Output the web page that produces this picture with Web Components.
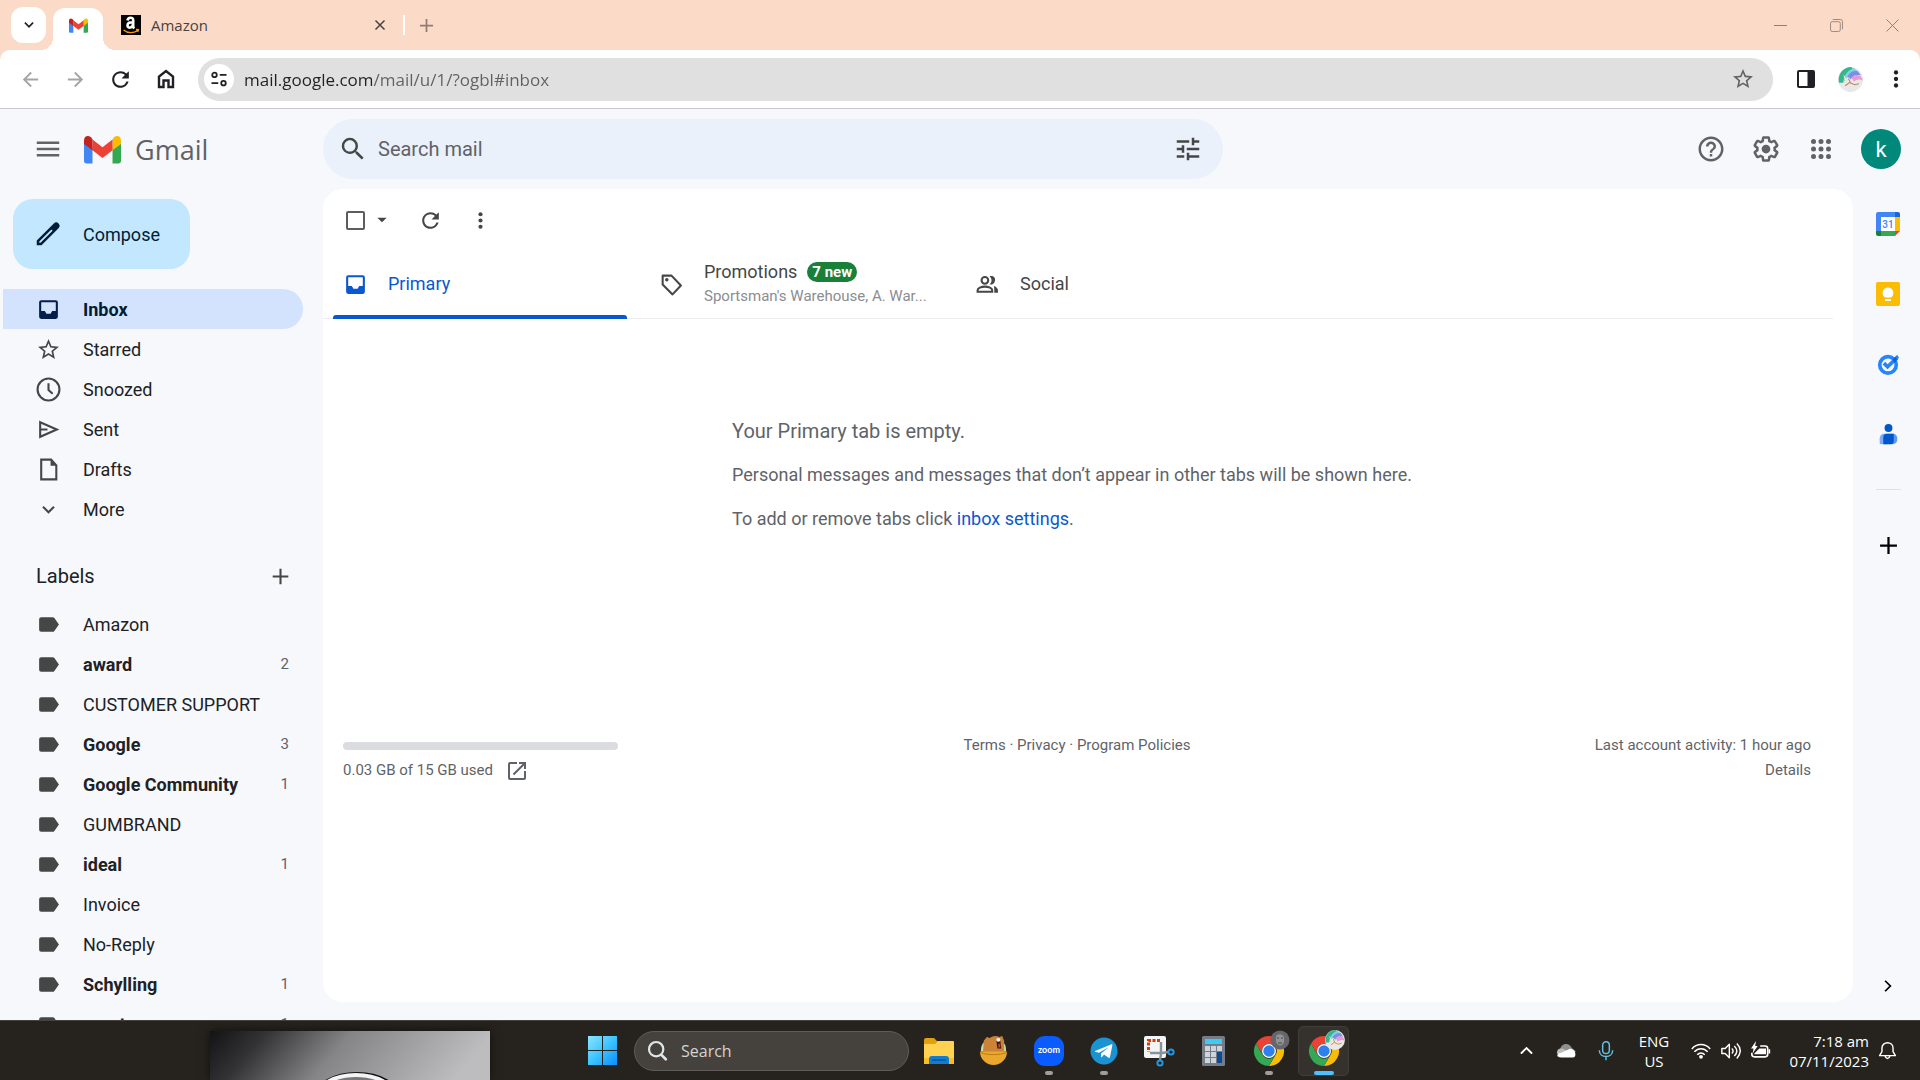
<!DOCTYPE html>
<html lang="en">
<head>
<meta charset="utf-8">
<title>Gmail</title>
<style>
body {
    margin: 0;
    height: 100vh;
    display: flex;
    flex-direction: column;
    overflow: hidden;
    font-family: Roboto, "Liberation Sans", sans-serif;
    font-size: 18px;
    color: #202124;
    background: #f6f8fc;
}
</style>
</head>
<body>
<tab-strip></tab-strip>
<address-bar></address-bar>
<gmail-app></gmail-app>
<task-bar></task-bar>

<script>

const GMAIL = `
    <path fill="#4285f4" d="M0 6v27a3 3 0 0 0 3 3h8V15z"/>
    <path fill="#34a853" d="M37 15v21h8a3 3 0 0 0 3-3V6z"/>
    <path fill="#fbbc04" d="M37 5v14l11-8V6c0-5-5-7-9-4z"/>
    <path fill="#ea4335" d="M11 19V5l13 10L37 5v14L24 29z"/>
    <path fill="#c5221f" d="M0 6v5l11 8V5L9 2C5-1 0 1 0 6z"/>`

const CHROME = `
    <path fill="#ea4335" d="M2 9.500A15 15 0 0 1 28 9.500L15 10a7 7 0 0 0-6.500 10z"/>
    <path fill="#fbbc04" d="M28 9.500A15 15 0 0 1 15 32l6.500-11a7 7 0 0 0-6-11z"/>
    <path fill="#34a853" d="M2 9.500A15 15 0 0 0 15 32l6.300-11.500A7 7 0 0 1 8.500 20.500z"/>
    <circle cx="15" cy="17" r="7" fill="#fff"/>
    <circle cx="15" cy="17" r="5.700" fill="#2f80ed"/>`

const RAINBOW = `
    <circle cx="12" cy="12" r="12" fill="#e8e8ea"/>
    <path fill="#35b58d" d="M1 15A12 12 0 0 1 13 0l2 3C9 4 6 9 5 15z"/>
    <path fill="#7fd3e0" d="M5 14C6 7 10 3 15 1l4 3c-7 1-10 5-11 9z"/>
    <path fill="#7d8ee8" d="M9 9c2-4 6-6 10-5l3 4c-5-1-8 1-10 4z"/>
    <path fill="#e79ad5" d="M13 10c2-3 6-3 9-1l2 4c-4-2-6-1-9 1z"/>
    <path fill="#f4e6d2" d="M5 7l3 4 3-1 2 5 7-1 1 4-6 1-7-1-3 1 2-5z"/>
    <path fill="none" stroke="#a08c7a" d="M7 18l4-3 5 2 4-1M10 11l2 4"/>`

// name: [viewBox, content]. Single-colour icons use currentcolor.
const ICONS = {
    gmail: ['0 0 48 36', GMAIL],
    chevron: ['0 0 24 24', '<path fill="none" stroke="currentcolor" stroke-width="3" d="M5 8l7 7 7-7"/>'],
    chevronThin: ['0 0 24 24', '<path d="M7.410 8.590L12 13.170l4.590-4.580L18 10l-6 6-6-6z"/>'],
    chevronUp: ['0 0 24 24', '<path fill="none" stroke="currentcolor" stroke-width="3" stroke-linecap="round" d="M4 16l8-8 8 8"/>'],
    chevronRight: ['0 0 24 24', '<path fill="none" stroke="currentcolor" stroke-width="3" d="M7 3l9 9-9 9"/>'],
    amazon: ['0 0 20 20', `<rect width="20" height="20" fill="#000"/>
        <path fill="none" stroke="#fff" stroke-width="2.600" d="M6.500 5.500C7 2 12.200 2 12.200 5v6.500c0 1 .6 1.500 1 2M12 7.200c-3 0-5.500.5-5.500 3.200 0 3.600 5.500 2.600 5.500-1.400"/>
        <path fill="none" stroke="#f90" stroke-width="1.300" d="M2.500 15c4 3.400 10 3.400 14 .6M15 14.500l2.500.2-.8 2.300"/>`],
    close: ['0 0 24 24', '<path fill="none" stroke="currentcolor" stroke-width="3" d="M3 3l18 18M21 3L3 21"/>'],
    closeThin: ['0 0 24 24', '<path fill="none" stroke="currentcolor" stroke-width="1.800" d="M1 1l22 22M23 1L1 23"/>'],
    minimize: ['0 0 24 24', '<path fill="none" stroke="currentcolor" stroke-width="1.800" d="M0 12h24"/>'],
    restore: ['0 0 24 24', '<g fill="none" stroke="currentcolor" stroke-width="1.600"><rect x="1" y="5" width="18" height="18" rx="3"/><path d="M5 1h14a4 4 0 0 1 4 4v14"/></g>'],
    plus: ['0 0 24 24', '<path fill="none" stroke="currentcolor" stroke-width="2" d="M12 4.500v15M4.500 12h15"/>'],
    back: ['0 0 24 24', '<path d="M20 11H7.830l5.590-5.590L12 4l-8 8 8 8 1.410-1.410L7.830 13H20z"/>'],
    forward: ['0 0 24 24', '<path d="M12 4l-1.410 1.410L16.170 11H4v2h12.170l-5.580 5.590L12 20l8-8z"/>'],
    refresh: ['0 0 24 24', '<path d="M17.650 6.350A7.958 7.958 0 0 0 12 4c-4.420 0-7.990 3.580-7.990 8s3.570 8 7.990 8c3.730 0 6.840-2.550 7.730-6h-2.080A5.990 5.990 0 0 1 12 18c-3.310 0-6-2.690-6-6s2.690-6 6-6c1.660 0 3.140.69 4.220 1.780L13 11h7V4z"/>'],
    home: ['0 0 24 24', '<path fill="none" stroke="currentcolor" stroke-width="2.400" d="M5 20V9.500L12 4l7 5.500V20h-4.500v-6.500h-5V20z"/>'],
    site: ['0 0 24 24', '<g fill="none" stroke="currentcolor" stroke-width="2.400"><circle cx="6" cy="6.500" r="3"/><path d="M13 6.500h9M2 17.500h9"/><circle cx="18" cy="17.500" r="3"/></g>'],
    star: ['0 0 24 24', '<path d="M22 9.240l-7.190-.62L12 2 9.190 8.630 2 9.240l5.460 4.730L5.820 21 12 17.270 18.180 21l-1.630-7.030zM12 15.400l-3.760 2.270 1-4.280-3.320-2.880 4.380-.38L12 6.100l1.710 4.040 4.380.38-3.320 2.880 1 4.280z"/>'],
    panel: ['0 0 24 24', '<path d="M5 3h14a2 2 0 0 1 2 2v14a2 2 0 0 1-2 2H5a2 2 0 0 1-2-2V5a2 2 0 0 1 2-2zm0 2v14h8.500V5z"/>'],
    rainbow: ['0 0 24 24', RAINBOW],
    more: ['0 0 24 24', '<circle cx="12" cy="6" r="2"/><circle cx="12" cy="12" r="2"/><circle cx="12" cy="18" r="2"/>'],
    menu: ['0 0 24 24', '<path d="M3 18h18v-2H3zm0-5h18v-2H3zm0-7v2h18V6z"/>'],
    search: ['0 0 24 24', '<path d="M15.500 14h-.79l-.28-.27A6.471 6.471 0 0 0 16 9.500 6.500 6.500 0 1 0 9.500 16c1.610 0 3.090-.59 4.230-1.570l.27.28v.79l5 4.990L20.490 19zm-6 0C7.010 14 5 11.990 5 9.500S7.010 5 9.500 5 14 7.010 14 9.500 11.990 14 9.500 14z"/>'],
    tune: ['0 0 24 24', '<path d="M3 17v2h6v-2H3zM3 5v2h10V5H3zm10 16v-2h8v-2h-8v-2h-2v6h2zM7 9v2H3v2h4v2h2V9H7zm14 4v-2H11v2h10zm-6-4h2V7h4V5h-4V3h-2v6z"/>'],
    help: ['0 0 24 24', '<path d="M11 18h2v-2h-2v2zm1-16C6.480 2 2 6.480 2 12s4.480 10 10 10 10-4.480 10-10S17.520 2 12 2zm0 18c-4.410 0-8-3.590-8-8s3.590-8 8-8 8 3.590 8 8-3.590 8-8 8zm0-14c-2.210 0-4 1.790-4 4h2c0-1.100.9-2 2-2s2 .9 2 2c0 2-3 1.750-3 5h2c0-2.250 3-2.500 3-5 0-2.210-1.790-4-4-4z"/>'],
    gear: ['0 0 24 24', '<path d="M13.850 22.250h-3.700c-.74 0-1.360-.54-1.450-1.270l-.27-1.890c-.27-.14-.53-.29-.79-.46l-1.800.72c-.7.26-1.470-.03-1.810-.65L2.200 15.530c-.35-.66-.2-1.440.36-1.880l1.530-1.190c-.01-.15-.02-.3-.02-.46 0-.15.01-.31.02-.46l-1.520-1.190c-.59-.45-.74-1.260-.37-1.880l1.850-3.190c.34-.62 1.110-.9 1.790-.63l1.810.73c.26-.17.52-.32.78-.46l.27-1.910c.09-.7.71-1.250 1.440-1.250h3.700c.74 0 1.360.54 1.450 1.270l.27 1.890c.27.14.53.29.79.46l1.800-.72c.71-.26 1.480.03 1.820.65l1.840 3.180c.36.66.2 1.440-.36 1.880l-1.520 1.190c.01.15.02.3.02.46s-.01.31-.02.46l1.520 1.190c.56.45.72 1.230.37 1.860l-1.860 3.220c-.34.62-1.110.9-1.800.63l-1.800-.72c-.26.17-.52.32-.78.46l-.27 1.910c-.1.68-.72 1.220-1.460 1.220zm-3.230-2h2.760l.37-2.550.53-.22c.44-.18.88-.44 1.340-.78l.45-.34 2.380.96 1.380-2.400-2.030-1.580.07-.56c.03-.26.06-.51.06-.78s-.03-.53-.06-.78l-.07-.56 2.030-1.580-1.390-2.400-2.390.96-.45-.35c-.42-.32-.87-.58-1.330-.77l-.52-.22-.37-2.550h-2.760l-.37 2.550-.53.21c-.44.19-.88.44-1.340.79l-.45.33-2.380-.95-1.390 2.390 2.030 1.580-.07.56a7 7 0 0 0-.06.79c0 .26.02.53.06.78l.07.56-2.030 1.580 1.380 2.400 2.390-.96.45.35c.43.33.86.58 1.330.77l.53.22z"/><circle cx="12" cy="12" r="3.500"/>'],
    apps: ['0 0 24 24', [6, 12, 18].map(y => [6, 12, 18].map(x => `<circle cx="${x}" cy="${y}" r="2"/>`).join('')).join('')],
    pencil: ['0 0 24 24', '<path fill-rule="evenodd" d="M20.400 3.600a2.600 2.600 0 0 0-3.700 0L3 17.200V21h3.800L20.400 7.300a2.600 2.600 0 0 0 0-3.700zM6 19H5v-1l9.700-9.700 1 1z"/>'],
    inbox: ['0 0 24 24', '<path fill-rule="evenodd" d="M5 3h14a2 2 0 0 1 2 2v14a2 2 0 0 1-2 2H5a2 2 0 0 1-2-2V5a2 2 0 0 1 2-2zm0 2v8.500h3.500l1.500 2.500h4l1.500-2.500H19V5z"/>'],
    clock: ['0 0 24 24', '<g fill="none" stroke="currentcolor" stroke-width="2"><circle cx="12" cy="12" r="10.500"/><path d="M12 6v6.500l4 3.500"/></g>'],
    send: ['0 0 24 24', '<path fill="none" stroke="currentcolor" stroke-width="2" d="M4 5l16 7-16 7zM4 12h7"/>'],
    draft: ['0 0 24 24', '<path fill="none" stroke="currentcolor" stroke-width="2" d="M5 2.500h9.500L19.500 8v13.500H5z"/><path d="M14 2v6.500h6z"/>'],
    label: ['0 0 24 24', '<path d="M17.630 5.840C17.270 5.330 16.670 5 16 5H5a2 2 0 0 0-2 2v10a2 2 0 0 0 2 2h11c.67 0 1.270-.33 1.630-.84L22 12z"/>'],
    tag: ['0 0 24 24', '<path fill="none" stroke="currentcolor" stroke-width="2" stroke-linejoin="round" d="M3.500 3.500h8.500l9 9.500-8 8.500-9.500-9.500z"/><circle cx="7.500" cy="7.500" r="1.700"/>'],
    people: ['0 0 24 24', '<g fill="none" stroke="currentcolor" stroke-width="2"><circle cx="9.500" cy="8" r="3.200"/><path d="M2.500 19v-1.500c0-2 3.500-3.500 7-3.500s7 1.500 7 3.500V19z"/></g><path d="M14 4c4.500-.8 6 2 5 5s-3 3-5 3c2.500-2.500 2.500-5.500 0-8zM18 13.500c3 1 4 2.500 4 4V20h-3.500v-2.500c0-1.500 0-2.500-.5-4z"/>'],
    caret: ['0 0 24 24', '<path d="M4 8h16l-8 8z"/>'],
    open: ['0 0 24 24', '<path d="M19 19H5V5h7V3H5a2 2 0 0 0-2 2v14a2 2 0 0 0 2 2h14a2 2 0 0 0 2-2v-7h-2zM14 3v2h3.590l-9.830 9.830 1.410 1.410L19 6.410V10h2V3z"/>'],
    calendar: ['0 0 24 24', `<rect width="24" height="24" rx="2" fill="#fff"/>
        <path fill="#4285f4" d="M2 0h17v5H5v14H0V2a2 2 0 0 1 2-2z"/>
        <path fill="#1967d2" d="M19 0h3a2 2 0 0 1 2 2v3h-5z"/>
        <path fill="#fbbc04" d="M19 5h5v14h-5z"/>
        <path fill="#34a853" d="M5 19h14v5H5z"/>
        <path fill="#188038" d="M0 19h5v5H2a2 2 0 0 1-2-2z"/>
        <path fill="#ea4335" d="M19 19h5l-5 5z"/>
        <text x="12" y="16" text-anchor="middle" font-size="10" font-weight="500" font-family="Roboto, sans-serif" fill="#4285f4">31</text>`],
    keep: ['0 0 24 24', `<rect width="24" height="24" rx="2" fill="#fbbc04"/>
        <path fill="#fff" d="M12 5.500a5.500 5.500 0 0 1 3 10H9a5.500 5.500 0 0 1 3-10zM9 17h6v2H9z"/>`],
    tasks: ['0 0 24 24', `<circle cx="12" cy="13" r="9" fill="none" stroke="#2684fc" stroke-width="4"/>
        <path fill="none" stroke="#2684fc" stroke-width="4" d="M7.500 11l4 4L22 5"/>
        <path fill="#0066da" d="M17 7l3-3 3 2-4 5z"/><path fill="#2684fc" d="M20 4l2-2 2 3-2 2z"/>`],
    contacts: ['0 0 24 24', `<rect x="2" y="11" width="14" height="12" rx="5" fill="#7baaf7"/><path fill="#7baaf7" d="M2 17h6v6H2z"/>
        <rect x="8" y="11" width="14" height="12" rx="5" fill="#5e97f6"/><path fill="#0057cc" d="M6 23v-8a4 4 0 0 1 4-4h8v8a4 4 0 0 1-4 4z"/>
        <circle cx="12" cy="4.500" r="4.500" fill="#0057cc"/>`],
    windows: ['0 0 29 29', `<defs><linearGradient id="w" x2="1" y2="1"><stop stop-color="#8be6ff"/><stop offset=".5" stop-color="#3cc4ff"/><stop offset="1" stop-color="#0a8cff"/></linearGradient></defs>
        <path fill="url(#w)" d="M0 0h14v14H0zM15 0h14v14H15zM0 15h14v14H0zM15 15h14v14H15z"/>`],
    winSearch: ['0 0 24 24', '<g fill="none" stroke="#dfe6ea" stroke-width="2.400"><circle cx="10" cy="10" r="7.800"/><path stroke-linecap="round" stroke-width="3" d="M16 16.500l4.500 4.500"/></g>'],
    folder: ['0 0 30 30', `<path fill="#e0a010" d="M0 4a2 2 0 0 1 2-2h8l3 3h15v9H0z"/>
        <path fill="#ffd34f" d="M0 8h11l3-3h15a1 1 0 0 1 1 1v22H0z"/><path fill="#f9bd2b" d="M0 22h30v6H0z"/>
        <path fill="#0f7dd1" d="M5 28v-5a3 3 0 0 1 3-3h14a3 3 0 0 1 3 3v5z"/><path stroke="#074f91" stroke-width="1.400" d="M8 24h14"/>`],
    bear: ['0 0 30 30', `<path fill="#cfe0a5" d="M2 16c0-6 2-9 4-10v10zM28 16c0-6-1-8-3-9v9z"/>
        <path fill="#cc8338" d="M4 17l1-12 3-4 3 1c3-2 7-3 10-1l3-1 2 5v12z"/>
        <path fill="#2b1b1b" d="M18 5h4l1 8h-4z"/><path fill="#d33c3c" d="M20 8h2v4h-2z"/><circle cx="20" cy="4" r="2" fill="#fff"/>
        <path fill="#e9a72b" d="M1 16h28a14 14 0 0 1-28 0z"/><path fill="none" stroke="#b97b16" d="M1 17c8 3 20 3 28 0"/>`],
    zoom: ['0 0 30 30', `<rect width="30" height="30" rx="11" fill="#0b5cff"/>
        <text x="15" y="17" text-anchor="middle" font-family="Lato, sans-serif" font-weight="700" font-size="9" fill="#fff">zoom</text>`],
    telegram: ['0 0 30 30', `<circle cx="15" cy="15" r="13.500" fill="#1b92d1"/>
        <path fill="#fff" d="M6 15l16-6.500c1-.4 1.500 0 1.300 1L21 21c-.3 1-1 1.200-1.800.6L15 18.500 13 21c-.6.600-1 .4-1-.3v-3.200L20 11l-10 5.700-4-1z"/>`],
    snip: ['0 0 30 30', `<rect width="22" height="22" rx="2" fill="#f3f4f6"/>
        <path fill="none" stroke="#d83b01" stroke-width="3" stroke-dasharray="3 1.500" d="M16 4.500H4.500V16"/>
        <path fill="none" stroke="#8a9299" stroke-width="2.400" d="M17 6v12l-1 6M6 17h12l6-1"/>
        <g fill="none" stroke="#2196e3" stroke-width="2"><circle cx="27" cy="16" r="2.600"/><circle cx="16" cy="27" r="2.600"/></g>`],
    calculator: ['0 0 30 30', `<rect x="3" width="23" height="30" rx="1.500" fill="#747d87"/><path fill="#3ccbf4" d="M6 3h17v5H6z"/>
        <path fill="#ced4da" d="M6 10h5v5H6zM12 10h5v5h-5zM18 10h5v5h-5zM6 16h5v5H6zM12 16h5v5h-5zM6 22h5v5H6zM12 22h5v5h-5z"/>
        <path fill="#0d4a94" d="M18 16h5v11h-5z"/>`],
    chromePhoto: ['0 2 30 30', `${CHROME}<circle cx="26" cy="6" r="9.500" fill="#66676a"/><path fill="#929396" d="M22 2c3-3 7-2 8 1v5c-1 4-6 5-8 0z"/><path fill="none" stroke="#48494b" d="M23 4h2M27 4h2M24 9h4"/>`],
    chromeRainbow: ['0 2 30 30', `${CHROME}<g transform="translate(16 -4) scale(.83)">${RAINBOW}</g>`],
    cloud: ['0 0 24 24', '<path fill="#8f8f8f" d="M5 10c1-6 10-8 13-1l5 4-16 4z"/><path fill="#bdbdbd" d="M1 15c0-5 4-6 7-5l8 4-10 5z"/><path fill="#fff" d="M6 20c-6 0-6-5 0-5.500L16 10c6-1 9 10 3 10z"/>'],
    mic: ['0 0 24 24', '<g fill="none" stroke="#63bfe0" stroke-width="1.800"><rect x="8" y="1" width="8" height="14" rx="4"/><path d="M4 11c0 10 16 10 16 0M12 19v4"/></g>'],
    wifi: ['0 0 24 24', '<g fill="none" stroke="currentcolor" stroke-width="1.800"><path d="M1 9.500c6-7 16-7 22 0M4 13c4.500-5 11.500-5 16 0M7.500 16.500c2.500-3 6.500-3 9 0"/></g><circle cx="12" cy="19" r="2.300"/>'],
    sound: ['0 0 24 24', '<path fill="none" stroke="currentcolor" stroke-width="1.700" stroke-linejoin="round" d="M1 9h4l5-5v16l-5-5H1zM13 9c2 2 2 4 0 6M16 6c4 4 4 8 0 12M19 3c6 6 5 12 0 18"/>'],
    battery: ['0 0 24 24', '<path fill="none" stroke="currentcolor" stroke-width="2" d="M11 6h6a3 3 0 0 1 3 3v7a3 3 0 0 1-3 3H4a3 3 0 0 1-3-3v-2"/><path d="M10 9h8v7H4v-1zM21 10h2v5h-2zM6 0L0 9h3l-1 6 6-9H5z"/>'],
    bell: ['0 0 24 24', '<path fill="none" stroke="currentcolor" stroke-width="1.800" stroke-linejoin="round" d="M2 18.500l3-5V9c0-9 14-9 14 0v4.500l3 5zM9 19c1 4 5 4 6 0"/>'],
}


class Base extends HTMLElement{

    connectedCallback(){
        this.attachShadow({mode:'open'}).innerHTML = `<style>
        :host, * { box-sizing: border-box; }
        button {
            border: 0;
            padding: 0;
            background: none;
            font: inherit;
            color: inherit;
            display: flex;
            align-items: center;
            justify-content: center;
            flex-shrink: 0;
        }
        a { color: inherit; text-decoration: none; }
        input { border: 0; outline: 0; padding: 0; background: none; font: inherit; min-width: 0; }
        </style>` + this.html
    }
}


class AppIcon extends Base{

    get html(){
        const [box, content] = ICONS[this.getAttribute('name')]
        const size = this.getAttribute('size') || 24

        return `
        <svg viewBox="${box}" width="${size}" height="${size}" aria-hidden="true">${content}</svg>
        <style>
        :host { display: flex; flex-shrink: 0; }
        svg { display: block; fill: currentcolor; overflow: visible; }
        </style>
        `
    }
}


class TabStrip extends Base{

    get html(){
        return `
        <button class="menu" aria-label="Search tabs"><app-icon name="chevron" size="14"></app-icon></button>
        <button class="active" aria-label="Gmail"><app-icon name="gmail" size="19"></app-icon></button>
        <div class="tab">
            <app-icon name="amazon" size="20"></app-icon>
            <span>Amazon</span>
            <button aria-label="Close tab"><app-icon name="close" size="12"></app-icon></button>
        </div>
        <button class="new" aria-label="New tab"><app-icon name="plus" size="21"></app-icon></button>
        <div class="window">
            <button aria-label="Minimize"><app-icon name="minimize" size="13"></app-icon></button>
            <button aria-label="Restore"><app-icon name="restore" size="13"></app-icon></button>
            <button aria-label="Close"><app-icon name="closeThin" size="13"></app-icon></button>
        </div>
        <style>
        :host {
            display: flex;
            align-items: center;
            flex-shrink: 0;
            height: 50px;
            padding-left: 11px;
            background: #fcdac8;
            font-family: "Open Sans", sans-serif;
            font-size: 15px;
            color: #474340;
        }
        .menu {
            width: 35px;
            height: 36px;
            border-radius: 12px;
            background: #fff;
            color: #202124;
        }
        .active {
            position: relative;
            align-self: flex-end;
            width: 50px;
            height: 42px;
            margin-left: 7px;
            padding-bottom: 8px;
            border-radius: 12px 12px 0 0;
            background: #fff;
        }
        .active::before, .active::after {
            content: "";
            position: absolute;
            bottom: 0;
            width: 12px;
            height: 12px;
        }
        .active::before {
            right: 100%;
            background: radial-gradient(circle at 0 0, transparent 12px, #fff 12px);
        }
        .active::after {
            left: 100%;
            background: radial-gradient(circle at 100% 0, transparent 12px, #fff 12px);
        }
        .tab {
            display: flex;
            align-items: center;
            gap: 10px;
            width: 302px;
            height: 20px;
            padding: 0 17px 0 18px;
            border-right: 2px solid #fff;
        }
        .tab button { margin-left: auto; }
        .new { width: 42px; height: 42px; color: #8f7d75; }
        .window { display: flex; margin-left: auto; color: #8f7d75; }
        .window button { width: 56px; height: 50px; }
        </style>
        `
    }
}


class AddressBar extends Base{

    get html(){
        return `
        <div class="bar">
            <button class="dim" aria-label="Back"><app-icon name="back" size="23"></app-icon></button>
            <button class="dim" aria-label="Forward"><app-icon name="forward" size="23"></app-icon></button>
            <button aria-label="Reload"><app-icon name="refresh" size="25"></app-icon></button>
            <button aria-label="Home"><app-icon name="home" size="24"></app-icon></button>
            <form>
                <button type="button" class="site" aria-label="Site information"><app-icon name="site" size="18"></app-icon></button>
                <input aria-label="Address" value="mail.google.com/mail/u/1/?ogbl#inbox">
                <button type="button" class="dark" aria-label="Bookmark this tab"><app-icon name="star" size="24"></app-icon></button>
            </form>
            <button aria-label="Side panel"><app-icon name="panel" size="24"></app-icon></button>
            <button aria-label="Profile"><app-icon name="rainbow" size="25"></app-icon></button>
            <button aria-label="Menu"><app-icon name="more" size="26"></app-icon></button>
        </div>
        <style>
        :host {
            display: block;
            flex-shrink: 0;
            background: #fcdac8;
            font-family: "Open Sans", sans-serif;
        }
        .bar {
            display: flex;
            align-items: center;
            height: 59px;
            padding: 0 2px 0 8px;
            border-bottom: 1px solid #c9cacc;
            border-radius: 10px 10px 0 0;
            background: #fff;
        }
        button { width: 45px; height: 45px; color: #202124; }
        .dim { color: #a5a5a5; }
        form {
            flex: 1;
            display: flex;
            align-items: center;
            height: 43px;
            margin: 0 10px;
            padding: 0 8px 0 6px;
            border-radius: 22px;
            background: #e0e0e0;
        }
        .site { width: 30px; height: 30px; margin-right: 10px; border-radius: 50%; background: #fff; }
        .dark { color: #5f6368; }
        input {
            flex: 1;
            height: 30px;
            font-size: 17px;
            color: #606060;
            -webkit-text-fill-color: transparent;
            background: linear-gradient(90deg, #202124 128px, #606060 128px);
            -webkit-background-clip: text;
            background-clip: text;
        }
        </style>
        `
    }
}


class NavItem extends Base{

    get html(){
        return `
        <a href="#">
            <app-icon name="${this.getAttribute('icon') || 'label'}" size="25"></app-icon>
            <span><slot></slot></span>
            <small>${this.getAttribute('count') || ''}</small>
        </a>
        <style>
        :host { display: block; flex-shrink: 0; }
        a {
            display: flex;
            align-items: center;
            gap: 22px;
            height: 40px;
            padding: 0 14px 0 33px;
            border-radius: 0 20px 20px 0;
        }
        app-icon { color: #444746; }
        small { margin-left: auto; font-size: 15px; color: #5f6368; }
        :host([unread]) span { font-weight: 700; }
        :host([selected]) a { background: #d3e3fd; color: #001d35; font-weight: 700; }
        :host([selected]) app-icon { color: #041e49; }
        </style>
        `
    }
}


class MailNav extends Base{

    get html(){
        return `
        <button class="compose"><app-icon name="pencil" size="30"></app-icon>Compose</button>
        <nav>
            <nav-item icon="inbox" selected>Inbox</nav-item>
            <nav-item icon="star">Starred</nav-item>
            <nav-item icon="clock">Snoozed</nav-item>
            <nav-item icon="send">Sent</nav-item>
            <nav-item icon="draft">Drafts</nav-item>
            <nav-item icon="chevronThin">More</nav-item>
        </nav>
        <header>
            <h2>Labels</h2>
            <button aria-label="Create new label"><app-icon name="plus" size="25"></app-icon></button>
        </header>
        <nav>
            <nav-item>Amazon</nav-item>
            <nav-item unread count="2">award</nav-item>
            <nav-item>CUSTOMER SUPPORT</nav-item>
            <nav-item unread count="3">Google</nav-item>
            <nav-item unread count="1">Google Community</nav-item>
            <nav-item>GUMBRAND</nav-item>
            <nav-item unread count="1">ideal</nav-item>
            <nav-item>Invoice</nav-item>
            <nav-item>No-Reply</nav-item>
            <nav-item unread count="1">Schylling</nav-item>
            <nav-item unread count="1">sport</nav-item>
        </nav>
        <style>
        :host {
            display: block;
            width: 323px;
            flex-shrink: 0;
            padding: 10px 20px 0 3px;
            overflow: hidden;
        }
        .compose {
            gap: 20px;
            height: 70px;
            margin: 0 0 20px 10px;
            padding: 0 30px 0 20px;
            border-radius: 20px;
            background: #c2e7ff;
            color: #001d35;
        }
        header {
            display: flex;
            align-items: center;
            justify-content: space-between;
            height: 56px;
            margin-top: 19px;
            padding: 0 10px 0 33px;
        }
        header button { color: #444746; }
        h2 { margin: 0; font-size: 20px; font-weight: 400; }
        </style>
        `
    }
}


class MailHeader extends Base{

    get html(){
        return `
        <div class="brand">
            <button aria-label="Main menu"><app-icon name="menu" size="30"></app-icon></button>
            <a href="#"><app-icon name="gmail" size="37"></app-icon>Gmail</a>
        </div>
        <form role="search">
            <button type="button" aria-label="Search"><app-icon name="search" size="30"></app-icon></button>
            <input aria-label="Search mail" placeholder="Search mail">
            <button type="button" aria-label="Search options"><app-icon name="tune" size="30"></app-icon></button>
        </form>
        <div class="tools">
            <button aria-label="Support"><app-icon name="help" size="30"></app-icon></button>
            <button aria-label="Settings"><app-icon name="gear" size="30"></app-icon></button>
            <button aria-label="Google apps"><app-icon name="apps" size="30"></app-icon></button>
            <button class="avatar" aria-label="Account">k</button>
        </div>
        <style>
        :host { display: flex; align-items: center; flex-shrink: 0; height: 80px; color: #5f6368; }
        .brand { display: flex; align-items: center; gap: 21px; width: 323px; padding-left: 33px; }
        .brand a { display: flex; align-items: center; gap: 14px; font: 27px "Open Sans", sans-serif; }
        form {
            display: flex;
            align-items: center;
            flex: 0 1 900px;
            height: 60px;
            padding: 0 20px 0 15px;
            border-radius: 30px;
            background: #eaf1fb;
            color: #444746;
        }
        input { flex: 1; margin-left: 10px; font-size: 20px; }
        input::placeholder { color: #5f6368; opacity: 1; }
        .tools { display: flex; align-items: center; margin-left: auto; padding-right: 19px; }
        .tools button { width: 55px; height: 55px; }
        .tools .avatar {
            width: 40px;
            height: 40px;
            margin-left: 13px;
            border-radius: 50%;
            background: #00897b;
            color: #fff;
            font-size: 22px;
        }
        </style>
        `
    }
}


class InboxTab extends Base{

    get html(){
        return `
        <button role="tab">
            <app-icon name="${this.getAttribute('icon')}" size="25"></app-icon>
            <div>
                <p><slot></slot><slot name="badge"></slot></p>
                <slot name="senders"></slot>
            </div>
        </button>
        <style>
        :host { display: block; width: 316px; color: #444746; }
        button {
            position: relative;
            justify-content: flex-start;
            gap: 20px;
            width: 100%;
            height: 70px;
            padding-left: 20px;
            text-align: left;
        }
        p { display: flex; align-items: center; gap: 10px; margin: 0; line-height: 24px; }
        ::slotted([slot=badge]) {
            padding: 0 5px;
            border-radius: 10px;
            background: #188038;
            color: #fff;
            font-size: 15px;
            font-weight: 700;
            line-height: 20px;
        }
        ::slotted([slot=senders]) {
            display: block;
            white-space: nowrap;
            color: #8a8d91;
            font-size: 15px;
            line-height: 24px;
        }
        :host([selected]) { color: #0b57d0; }
        :host([selected]) button::after {
            content: "";
            position: absolute;
            left: 10px;
            right: 12px;
            bottom: 0;
            height: 4px;
            border-radius: 3px 3px 0 0;
            background: #0b57d0;
        }
        </style>
        `
    }
}


class MailList extends Base{

    get html(){
        return `
        <div class="toolbar">
            <input type="checkbox" aria-label="Select">
            <button class="caret" aria-label="Select options"><app-icon name="caret" size="14"></app-icon></button>
            <button aria-label="Refresh"><app-icon name="refresh" size="25"></app-icon></button>
            <button aria-label="More"><app-icon name="more" size="25"></app-icon></button>
        </div>
        <div class="tabs" role="tablist">
            <inbox-tab icon="inbox" selected>Primary</inbox-tab>
            <inbox-tab icon="tag">
                Promotions
                <span slot="badge">7 new</span>
                <span slot="senders">Sportsman's Warehouse, A. War...</span>
            </inbox-tab>
            <inbox-tab icon="people">Social</inbox-tab>
        </div>
        <section>
            <h3>Your Primary tab is empty.</h3>
            <p>Personal messages and messages that don’t appear in other tabs will be shown here.</p>
            <p>To add or remove tabs click <a href="#">inbox settings</a>.</p>
        </section>
        <footer>
            <div>
                <progress value="0" max="15" aria-label="Storage used"></progress>
                <a class="storage" href="#">0.03 GB of 15 GB used<app-icon name="open" size="24"></app-icon></a>
            </div>
            <div><a href="#">Terms</a> · <a href="#">Privacy</a> · <a href="#">Program Policies</a></div>
            <div class="activity">Last account activity: 1 hour ago<br><a href="#">Details</a></div>
        </footer>
        <style>
        :host {
            display: block;
            flex: 1;
            min-width: 0;
            margin-bottom: 18px;
            border-radius: 20px;
            background: #fff;
            overflow: hidden;
        }
        .toolbar { display: flex; align-items: center; height: 60px; padding: 2px 0 0 23px; color: #444746; }
        .toolbar button { width: 50px; height: 50px; }
        .toolbar .caret { width: 20px; margin: 0 13px 0 7px; }
        [type=checkbox] {
            appearance: none;
            width: 19px;
            height: 19px;
            margin: 0;
            border: 2px solid #5b5e5d;
            border-radius: 2px;
        }
        .tabs { display: flex; height: 70px; margin-right: 20px; box-shadow: inset 0 -1px #ebedef; }
        section {
            width: fit-content;
            margin: 100px auto 0;
            color: #5f6368;
            padding-right: 32px;
        }
        h3, p { margin: 0 0 20px; font-weight: 400; font-size: 18px; line-height: 24px; }
        h3 { font-size: 20px; }
        section a { color: #0b57d0; }
        footer {
            display: grid;
            grid-template-columns: 1fr auto 1fr;
            margin: 202px 42px 0 20px;
            color: #5f6368;
            font-size: 15px;
            line-height: 25px;
        }
        progress {
            appearance: none;
            display: block;
            width: 275px;
            height: 8px;
            margin: 9px 0 8px;
            border: 0;
            border-radius: 4px;
            background: #dadce0;
            overflow: hidden;
        }
        progress::-webkit-progress-bar { background: #dadce0; }
        .storage { display: flex; align-items: center; gap: 12px; width: fit-content; }
        .activity { text-align: right; }
        </style>
        `
    }
}


class SidePanel extends Base{

    get html(){
        return `
        <button aria-label="Calendar"><app-icon name="calendar" size="24"></app-icon></button>
        <button aria-label="Keep"><app-icon name="keep" size="24"></app-icon></button>
        <button aria-label="Tasks"><app-icon name="tasks" size="22"></app-icon></button>
        <button aria-label="Contacts"><app-icon name="contacts" size="21"></app-icon></button>
        <hr>
        <button aria-label="Get add-ons"><app-icon name="plus" size="27"></app-icon></button>
        <button class="hide" aria-label="Hide side panel"><app-icon name="chevronRight" size="14"></app-icon></button>
        <style>
        :host {
            display: flex;
            flex-direction: column;
            align-items: center;
            flex-shrink: 0;
            width: 67px;
            padding-left: 3px;
            color: #000;
        }
        button { width: 50px; height: 70px; }
        hr { width: 25px; height: 1px; margin: 20px 0; border: 0; background: #dfe1e5; }
        .hide { height: 40px; margin: auto 0 14px; }
        </style>
        `
    }
}


class GmailApp extends Base{

    get html(){
        return `
        <mail-header></mail-header>
        <main>
            <mail-nav></mail-nav>
            <mail-list></mail-list>
            <side-panel></side-panel>
        </main>
        <style>
        :host { display: flex; flex-direction: column; flex: 1; min-height: 0; background: #f6f8fc; }
        main { display: flex; flex: 1; min-height: 0; }
        </style>
        `
    }
}


class TaskApp extends Base{

    get html(){
        return `
        <button aria-label="${this.getAttribute('label')}">
            <app-icon name="${this.getAttribute('icon')}" size="${this.getAttribute('size') || 30}"></app-icon>
        </button>
        <style>
        :host { display: block; padding: 0 2px; }
        button {
            position: relative;
            width: 51px;
            height: 50px;
            border: 1px solid transparent;
            border-radius: 5px;
        }
        :host([running]) button::after {
            content: "";
            position: absolute;
            bottom: 0;
            width: 8px;
            height: 4px;
            border-radius: 2px;
            background: #a09d9a;
        }
        :host([active]) button { background: #35322d; border-color: #403d38; }
        :host([active]) button::after { width: 20px; background: #4cc2ff; }
        </style>
        `
    }
}


class TaskBar extends Base{

    get html(){
        return `
        <svg class="preview" viewBox="0 0 280 49" width="280" height="49" aria-hidden="true">
            <defs>
                <linearGradient id="g" y2=".15">
                    <stop stop-color="#131315"/>
                    <stop offset=".2" stop-color="#333335"/>
                    <stop offset=".5" stop-color="#858587"/>
                    <stop offset="1" stop-color="#bdbdbf"/>
                </linearGradient>
            </defs>
            <path fill="url(#g)" d="M0 0h280v49H0z"/>
            <ellipse cx="147" cy="66" rx="42" ry="24" fill="#77777a" stroke="#111" stroke-width="2"/>
            <ellipse cx="146" cy="66" rx="39" ry="22" fill="none" stroke="#f4f4f4" stroke-width="4"/>
        </svg>
        <div class="apps">
            <task-app icon="windows" size="29" label="Start"></task-app>
            <label>
                <app-icon name="winSearch" size="22"></app-icon>
                <input aria-label="Search" placeholder="Search">
            </label>
            <task-app icon="folder" label="File Explorer"></task-app>
            <task-app icon="bear" size="29" label="Game"></task-app>
            <task-app icon="zoom" label="Zoom" running></task-app>
            <task-app icon="telegram" label="Telegram" running></task-app>
            <task-app icon="snip" label="Snipping Tool"></task-app>
            <task-app icon="calculator" label="Calculator"></task-app>
            <task-app icon="chromePhoto" label="Chrome" running></task-app>
            <task-app icon="chromeRainbow" label="Chrome" running active></task-app>
        </div>
        <div class="tray">
            <button aria-label="Hidden icons"><app-icon name="chevronUp" size="15"></app-icon></button>
            <button aria-label="OneDrive"><app-icon name="cloud" size="21"></app-icon></button>
            <button aria-label="Microphone"><app-icon name="mic" size="20"></app-icon></button>
            <button class="lang">ENG<br>US</button>
            <button class="status" aria-label="Network, volume, battery">
                <app-icon name="wifi" size="20"></app-icon>
                <app-icon name="sound" size="20"></app-icon>
                <app-icon name="battery" size="20"></app-icon>
            </button>
            <button class="clock">7:18 am<br>07/11/2023</button>
            <button class="bell" aria-label="Notifications"><app-icon name="bell" size="19"></app-icon></button>
        </div>
        <style>
        :host {
            display: grid;
            grid-template-columns: 1fr auto 1fr;
            align-items: center;
            flex-shrink: 0;
            height: 60px;
            padding-left: 6px;
            border-top: 1px solid #45433f;
            background: #26231e;
            color: #fff;
            font-family: "Open Sans", sans-serif;
            font-size: 15px;
        }
        .preview { align-self: end; margin-left: 204px; box-shadow: 0 0 10px #0008; }
        .apps, .tray { display: flex; align-items: center; }
        label {
            display: flex;
            align-items: center;
            gap: 12px;
            width: 275px;
            height: 40px;
            margin: 0 2px 0 4px;
            padding: 0 12px;
            border: 1px solid #5f5c58;
            border-radius: 20px;
            background: #45423d;
        }
        input { flex: 1; font-size: 16px; }
        input::placeholder { color: #d4d3d1; opacity: 1; }
        .tray { justify-content: flex-end; padding-right: 14px; }
        .tray button { width: 40px; height: 50px; line-height: 20px; }
        .tray .lang { width: 56px; margin-right: 4px; }
        .tray .status { width: 90px; gap: 10px; }
        .tray .clock { width: 93px; justify-content: flex-end; text-align: right; }
        .tray .bell { width: 37px; }
        </style>
        `
    }
}


customElements.define('app-icon', AppIcon)
customElements.define('tab-strip', TabStrip)
customElements.define('address-bar', AddressBar)
customElements.define('nav-item', NavItem)
customElements.define('mail-nav', MailNav)
customElements.define('mail-header', MailHeader)
customElements.define('inbox-tab', InboxTab)
customElements.define('mail-list', MailList)
customElements.define('side-panel', SidePanel)
customElements.define('gmail-app', GmailApp)
customElements.define('task-app', TaskApp)
customElements.define('task-bar', TaskBar)

</script>
</body>
</html>
